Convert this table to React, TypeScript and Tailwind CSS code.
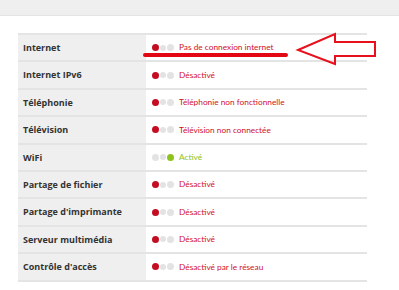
import React from "react";

type Status = "off" | "on";

const rows: { label: string; value: string; status: Status }[] = [
  { label: "Internet", value: "Pas de connexion internet", status: "off" },
  { label: "Internet IPv6", value: "Désactivé", status: "off" },
  { label: "Téléphonie", value: "Téléphonie non fonctionnelle", status: "off" },
  { label: "Télévision", value: "Télévision non connectée", status: "off" },
  { label: "WiFi", value: "Activé", status: "on" },
  { label: "Partage de fichier", value: "Désactivé", status: "off" },
  { label: "Partage d'imprimante", value: "Désactivé", status: "off" },
  { label: "Serveur multimédia", value: "Désactivé", status: "off" },
  { label: "Contrôle d'accès", value: "Désactivé par le réseau", status: "off" },
];

function Dots({ status }: { status: Status }) {
  return (
    <div className="flex items-center gap-px">
      <span className={`w-[7px] h-[7px] rounded-full ${status === "off" ? "bg-[#c40d22]" : "bg-[#e3e3e3]"}`} />
      <span className="w-[6px] h-[6px] rounded-full bg-[#e3e3e3]" />
      <span className={`w-[7px] h-[7px] rounded-full ${status === "on" ? "bg-[#8dc21f]" : "bg-[#e3e3e3]"}`} />
    </div>
  );
}

export default function App() {
  return (
    <div className="relative w-[399px] h-[290px] bg-white overflow-hidden font-['Open_Sans',sans-serif]">
      <div className="h-[16px] bg-[#efefef] border-b border-[#e4e4e4]" />

      <div className="ml-[18px] mt-[17px] w-[349px] border-b-2 border-[#e4e4e4]">
        {rows.map((row) => (
          <div key={row.label} className="flex h-[27.4px] border-t-2 border-[#e4e4e4]">
            <div className="w-[128px] bg-[#efefef] flex items-center pl-[5px] text-[9px] font-bold text-[#333]">
              {row.label}
            </div>
            <div className="flex-1 flex items-center pl-[6px] gap-[5px]">
              <Dots status={row.status} />
              <span
                className={`font-['Lato',sans-serif] text-[8.3px] ${row.status === "on" ? "text-[#8dc21f]" : "text-[#d0102b]"}`}
              >
                {row.value}
              </span>
            </div>
          </div>
        ))}
      </div>

      {/* annotation */}
      <div className="absolute left-[143px] top-[53px] w-[145px] h-[4px] rounded-full bg-[#e30613]" />
      <svg className="absolute left-0 top-0" width="399" height="290">
        <polygon
          points="298,50 335,34 335,42 375,42 375,56 335,56 335,64"
          fill="none"
          stroke="#e8101c"
          strokeWidth="2"
          strokeLinejoin="miter"
        />
      </svg>
    </div>
  );
}
